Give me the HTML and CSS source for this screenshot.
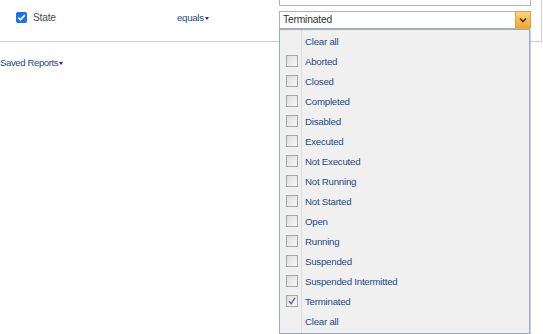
FILE: index.html
```html
<!DOCTYPE html>
<html>
<head>
<meta charset="utf-8">
<link rel="stylesheet" href="styles.css">
</head>
<body>
<div class="criteria">
  <div class="field">
    <span class="cb-main"><svg viewBox="0 0 11 11" width="11" height="11"><path d="M2.3 5.6 L4.5 7.8 L8.8 3.2" fill="none" stroke="#fff" stroke-width="1.8"/></svg></span>
    <span class="field-name">State</span>
  </div>
  <div class="op">equals<span class="caret"></span></div>
  <div class="value">
    <div class="textbox"></div>
    <div class="select">
      <span class="select-text">Terminated</span>
      <span class="select-btn"><svg viewBox="0 0 14 16" width="14" height="16"><path d="M4 6.5 L7 9.5 L10 6.5" fill="none" stroke="#3a3020" stroke-width="1.6"/></svg></span>
    </div>
    <div class="menu">
      <div class="item"><span class="ic"></span><span class="lbl">Clear all</span></div>
      <div class="item"><span class="ic"><span class="box"></span></span><span class="lbl">Aborted</span></div>
      <div class="item"><span class="ic"><span class="box"></span></span><span class="lbl">Closed</span></div>
      <div class="item"><span class="ic"><span class="box"></span></span><span class="lbl">Completed</span></div>
      <div class="item"><span class="ic"><span class="box"></span></span><span class="lbl">Disabled</span></div>
      <div class="item"><span class="ic"><span class="box"></span></span><span class="lbl">Executed</span></div>
      <div class="item"><span class="ic"><span class="box"></span></span><span class="lbl">Not Executed</span></div>
      <div class="item"><span class="ic"><span class="box"></span></span><span class="lbl">Not Running</span></div>
      <div class="item"><span class="ic"><span class="box"></span></span><span class="lbl">Not Started</span></div>
      <div class="item"><span class="ic"><span class="box"></span></span><span class="lbl">Open</span></div>
      <div class="item"><span class="ic"><span class="box"></span></span><span class="lbl">Running</span></div>
      <div class="item"><span class="ic"><span class="box"></span></span><span class="lbl">Suspended</span></div>
      <div class="item"><span class="ic"><span class="box"></span></span><span class="lbl">Suspended Intermitted</span></div>
      <div class="item"><span class="ic"><span class="box checked"><svg viewBox="0 0 10 10" width="10" height="10"><path d="M2 5.2 L4.2 7.8 L8 1.8" fill="none" stroke="#3d5a9c" stroke-width="1.2"/></svg></span></span><span class="lbl">Terminated</span></div>
      <div class="item"><span class="ic"></span><span class="lbl">Clear all</span></div>
    </div>
  </div>
</div>
<div class="saved">Saved Reports<span class="caret"></span></div>
</body>
</html>
```

FILE: styles.css
```css
html, body {
  margin: 0;
  padding: 0;
  background: #fff;
  font-family: "Liberation Sans", Arial, sans-serif;
}

body {
  min-height: 334px;
  overflow: hidden;
}

.criteria {
  display: grid;
  grid-template-columns: 161px 102px 252px;
  padding-left: 16px;
  box-sizing: border-box;
  width: 542px;
  height: 42px;
  border-right: 1px solid #cfcfcf;
  border-bottom: 1px solid #cfcfcf;
  align-items: start;
}

.field {
  display: flex;
  align-items: center;
  height: 20px;
  margin-top: 7px;
}

.cb-main {
  width: 11px;
  height: 11px;
  background: #1a73e8;
  border-radius: 2px;
  display: flex;
  margin-top: 1px;
}

.field-name {
  margin-left: 6px;
  font-size: 10.2px;
  letter-spacing: -0.2px;
  color: #4a4a4a;
}

.op {
  display: flex;
  align-items: center;
  height: 20px;
  margin-top: 7px;
  font-size: 9.7px;
  letter-spacing: -0.3px;
  color: #1c4a8a;
}

.caret {
  display: inline-block;
  width: 0;
  height: 0;
  border-left: 2.5px solid transparent;
  border-right: 2.5px solid transparent;
  border-top: 3px solid #333;
  margin-left: 1px;
  margin-top: 3px;
}

.value {
  position: relative;
  display: flex;
  flex-direction: column;
}

.textbox {
  height: 20px;
  margin-top: -14px;
  border: 1px solid #b4b4b4;
  box-sizing: border-box;
  background: #fff;
}

.select {
  margin-top: 5px;
  height: 18px;
  display: flex;
  box-sizing: border-box;
  border: 1px solid #b0b0b0;
  border-right: none;
  background: #fff;
}

.select-text {
  flex: 1;
  padding-left: 3px;
  font-size: 10.3px;
  letter-spacing: -0.2px;
  line-height: 16px;
  color: #333;
}

.select-btn {
  width: 14px;
  height: 16px;
  margin-top: -1px;
  background: linear-gradient(#fcd47e, #f2a52c);
  border: 1px solid #d9a44a;
  border-bottom-color: #e0b060;
  display: flex;
}

.menu {
  position: absolute;
  top: 100%;
  left: 0;
  z-index: 5;
  width: 251px;
  box-sizing: border-box;
  border: 1px solid #9aa9c8;
  padding: 1px 0 2px;
  background: linear-gradient(90deg, #f0f0f0 21px, #dcdcdc 21px, #dcdcdc 22px, #f0f0f0 22px);
  box-shadow: 1px 1px 1px rgba(0, 0, 0, 0.18);
}

.item {
  display: grid;
  grid-template-columns: 22px 1fr;
  height: 20px;
  align-items: center;
}

.ic {
  display: flex;
  padding-left: 6px;
}

.box {
  width: 12px;
  height: 12px;
  box-sizing: border-box;
  border: 1px solid #a9a9a9;
  background: linear-gradient(135deg, #dcdcdc, #f8f8f8);
  display: flex;
  align-items: center;
  justify-content: center;
}

.lbl {
  padding-left: 3px;
  font-size: 9.7px;
  letter-spacing: -0.24px;
  color: #1c4a8a;
  white-space: nowrap;
}

.saved {
  margin-top: 13px;
  height: 14px;
  display: flex;
  align-items: center;
  font-size: 9.6px;
  letter-spacing: -0.4px;
  color: #1c4a8a;
}
```
